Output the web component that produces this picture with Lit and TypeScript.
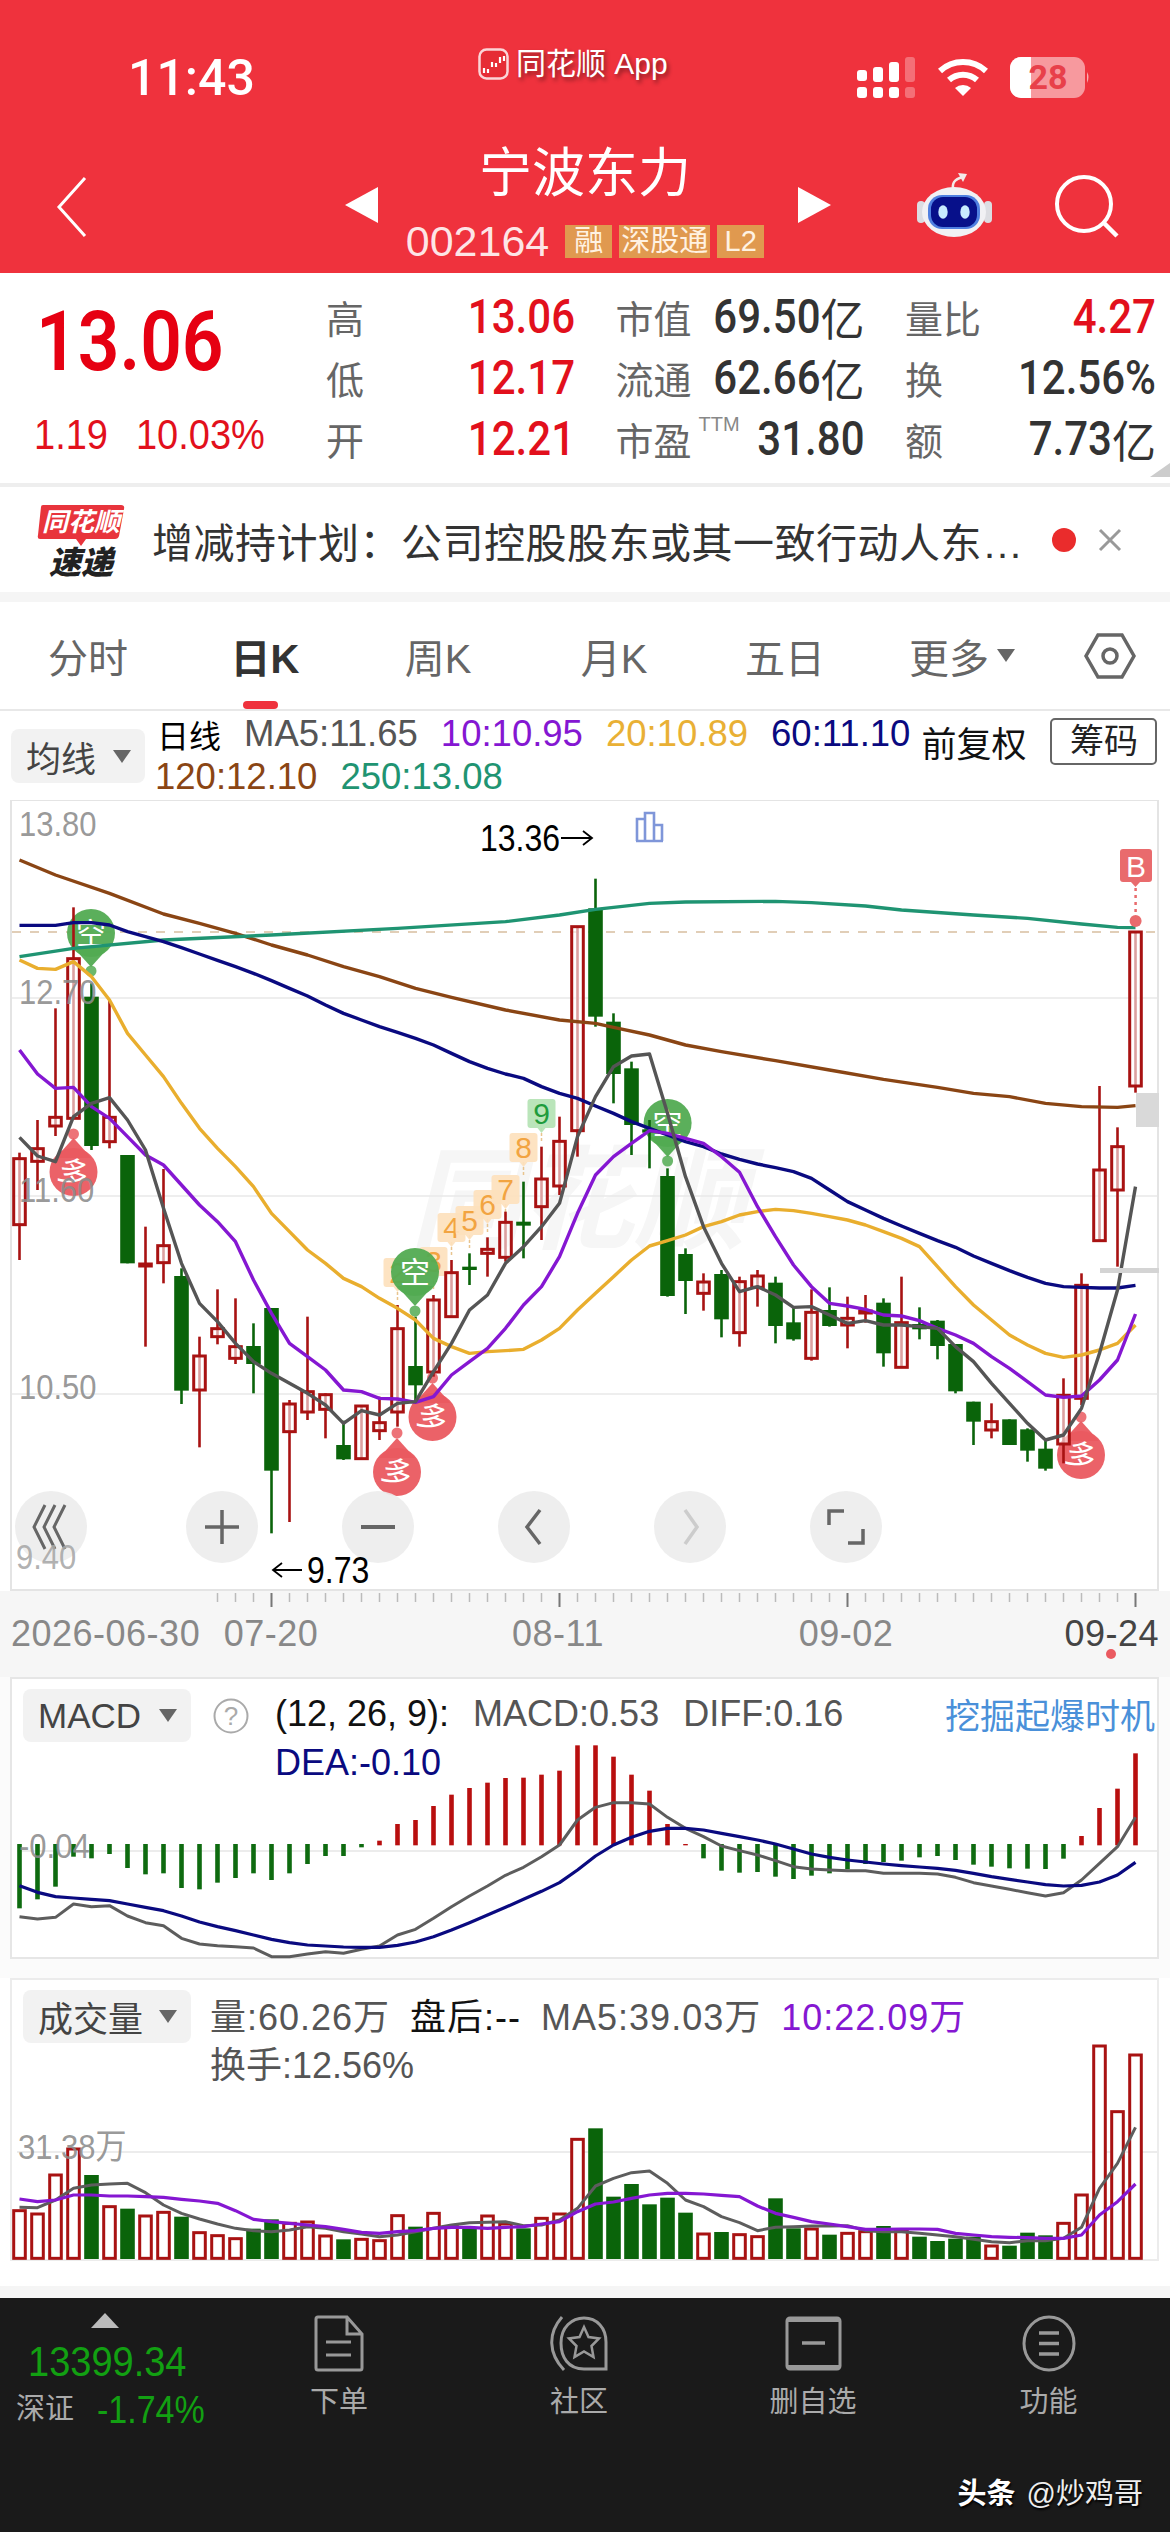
import { LitElement, html, css, svg } from "lit";
import { customElement } from "lit/decorators.js";

const X = (i: number) => 19.5 + 18 * i;
const Y = (z: number) => 1000 + z / 3;
const YM = (z: number) => 1660 + z / 3;
const YV = (z: number) => 1970 + z / 3;

const RED = "#a81212";
const GREEN = "#0a640a";

type C = [string, number, number, number, number];
const candles: C[] = [
  ["r", 458, 476, 674, 780], ["r", 360, 446, 484, 570], ["r", 25, 352, 378, 408], ["r", -278, -124, 355, 355],
  ["g", -50, -10, 438, 450], ["r", 0, 352, 425, 445], ["g", 465, 465, 790, 790], ["r", 680, 792, 798, 1040],
  ["r", 507, 737, 788, 850], ["g", 805, 828, 1172, 1212], ["r", 1010, 1068, 1170, 1342], ["r", 868, 986, 1010, 1033],
  ["r", 895, 1040, 1075, 1092], ["g", 970, 1038, 1092, 1180], ["g", 924, 924, 1412, 1600], ["r", 1200, 1212, 1295, 1566],
  ["r", 950, 1175, 1236, 1260], ["r", 1180, 1184, 1228, 1315], ["g", 1262, 1335, 1378, 1380], ["r", 1218, 1218, 1376, 1378],
  ["r", 1190, 1268, 1292, 1320], ["r", 915, 986, 1236, 1280], ["g", 950, 1098, 1156, 1205], ["r", 885, 900, 1116, 1130],
  ["r", 780, 818, 950, 950], ["g", 760, 800, 810, 855], ["r", 712, 748, 760, 830], ["r", 635, 667, 772, 785],
  ["g", 545, 665, 677, 775], ["r", 440, 537, 620, 720], ["r", 350, 424, 558, 585], ["r", -220, -220, 392, 470],
  ["g", -364, -275, 50, 80], ["g", 40, 65, 222, 310], ["g", 185, 205, 375, 465], ["g", 360, 388, 398, 505],
  ["g", 505, 528, 888, 890], ["g", 745, 762, 843, 942], ["r", 820, 846, 880, 932], ["g", 810, 822, 958, 1012],
  ["r", 830, 845, 998, 1040], ["r", 810, 828, 862, 920], ["g", 830, 848, 978, 1030], ["g", 920, 967, 1018, 1022],
  ["r", 868, 937, 1075, 1082], ["g", 862, 930, 978, 980], ["r", 890, 955, 975, 1045], ["r", 885, 933, 939, 968],
  ["g", 895, 908, 1060, 1100], ["r", 830, 968, 1102, 1102], ["g", 922, 972, 988, 1018], ["g", 960, 962, 1038, 1078],
  ["g", 1032, 1032, 1174, 1180], ["g", 1205, 1205, 1265, 1335], ["r", 1210, 1265, 1290, 1315], ["g", 1258, 1258, 1335, 1335],
  ["g", 1285, 1288, 1352, 1385], ["g", 1320, 1346, 1406, 1412], ["r", 1135, 1186, 1332, 1390], ["r", 820, 856, 1195, 1215],
  ["r", 258, 510, 722, 725], ["r", 382, 440, 570, 800], ["r", -204, -204, 258, 278],
];

const ma5 = [412,468,485,350,310,293,360,450,625,790,910,965,1030,1085,1120,1150,1180,1215,1270,1232,1245,1210,1205,1115,1030,930,885,790,740,680,610,410,290,200,168,162,340,530,680,790,875,860,885,922,920,945,970,962,975,975,980,985,1040,1085,1150,1210,1270,1320,1305,1225,1060,870,560];
const ma10 = [150,222,265,262,320,355,410,465,495,555,615,665,725,840,940,1030,1070,1110,1170,1175,1195,1197,1207,1190,1125,1085,1045,985,915,860,770,640,525,470,430,392,400,415,430,470,517,620,710,795,860,910,918,928,945,948,962,985,1005,1030,1070,1105,1145,1185,1192,1188,1140,1080,942];
const ma20 = [-120,-95,-92,-115,-70,0,100,165,230,310,385,445,500,560,640,695,750,790,835,860,895,925,960,1015,1040,1060,1055,1052,1048,1020,985,930,880,830,780,738,722,705,680,665,645,635,628,632,640,650,660,675,695,715,740,800,860,915,960,1005,1035,1060,1072,1065,1050,1030,975];
const ma60 = [-224,-224,-224,-232,-232,-225,-205,-190,-175,-157,-138,-119,-100,-80,-58,-35,-12,15,40,60,80,97,115,135,160,185,205,222,235,260,280,295,318,340,365,385,405,425,440,462,478,492,503,515,535,570,605,630,655,678,700,722,742,768,790,812,832,850,860,862,864,864,856];
const ma120: [number, number][] = [[0,-420],[2,-375],[5,-320],[8,-258],[10,-230],[12,-200],[14,-165],[16,-135],[18,-100],[20,-70],[22,-35],[24,-8],[27,30],[30,60],[32,70],[33,82],[35,105],[37,135],[39,155],[42,182],[45,210],[48,238],[51,262],[53,280],[55,290],[57,310],[59,320],[61,322],[62,317]];
const ma250: [number, number][] = [[0,-130],[3,-155],[8,-180],[14,-195],[21,-215],[27,-235],[30,-255],[32,-272],[35,-290],[37,-294],[42,-296],[44,-292],[47,-282],[49,-270],[53,-255],[56,-245],[59,-228],[61,-218],[62,-217]];

const macdBars = [745,718,680,590,595,582,624,643,640,684,688,668,654,640,660,640,612,588,588,562,542,492,480,438,404,384,368,354,353,344,332,256,256,290,344,392,492,552,595,632,638,636,650,657,647,640,628,612,606,602,592,588,600,614,620,625,626,627,596,528,444,386,280];
const macdDiff = [770,777,772,732,740,737,768,788,797,835,852,857,860,864,890,890,882,875,880,868,858,825,808,775,740,708,678,646,622,590,555,480,442,428,428,432,472,505,530,558,572,585,602,620,627,630,632,632,640,640,640,642,652,668,678,688,698,708,698,660,610,560,472];
const macdDea = [677,697,710,714,718,722,732,742,752,768,786,800,812,825,838,848,855,858,861,862,862,856,846,830,810,788,765,742,718,694,668,630,588,555,532,514,505,505,510,520,530,540,552,567,582,592,600,606,612,617,621,625,631,640,650,658,666,674,678,676,666,645,607];

const volTops = [722,732,615,537,615,710,716,738,727,740,788,797,806,776,748,760,756,798,808,808,812,737,770,730,770,775,738,762,775,745,732,508,475,680,642,703,683,728,792,786,794,800,685,775,777,794,790,785,768,780,800,813,806,800,828,827,788,796,760,675,228,425,255];
const volMa5 = [712,713,690,655,645,642,640,668,705,730,747,762,775,782,785,780,770,775,785,792,800,795,785,775,765,758,757,755,767,765,750,715,648,625,608,603,640,690,710,740,758,782,772,770,768,768,767,782,785,785,790,795,800,808,815,818,812,812,805,772,655,580,472];
const volMa10 = [687,695,690,675,675,678,678,680,682,688,693,700,722,748,755,760,765,770,778,787,790,785,782,775,772,772,775,772,770,762,755,725,702,696,685,675,670,670,672,676,680,708,730,742,755,762,770,778,778,777,777,778,790,795,800,802,803,805,805,795,735,695,642];

const line = (zs: number[], f: (z: number) => number, color: string, w = 3.4) =>
  svg`<polyline fill="none" stroke=${color} stroke-width=${w} stroke-linejoin="round" points=${zs.map((z, i) => `${X(i)},${f(z)}`).join(" ")}></polyline>`;
const sparse = (ps: [number, number][], f: (z: number) => number, color: string, w = 3.4) =>
  svg`<polyline fill="none" stroke=${color} stroke-width=${w} stroke-linejoin="round" points=${ps.map(([i, z]) => `${X(i)},${f(z)}`).join(" ")}></polyline>`;

const candle = (c: C, i: number) => {
  const x = X(i);
  const col = c[0] === "r" ? RED : GREEN;
  const wick = svg`<line x1=${x} x2=${x} y1=${Y(c[1])} y2=${Y(c[4])} stroke=${col} stroke-width="2.6"></line>`;
  const h = Y(c[3]) - Y(c[2]);
  return c[0] === "r"
    ? svg`${wick}<rect x=${x - 5.8} y=${Y(c[2])} width="11.6" height=${h} fill="#fff" fill-opacity=".6" stroke=${RED} stroke-width="3"></rect>`
    : svg`${wick}<rect x=${x - 7.3} y=${Y(c[2])} width="14.6" height=${h} fill=${GREEN}></rect>`;
};

const tag = (i: number, y1: number, label: string, bg = "#fde1bd", fg = "#f2a441") => {
  const x = X(i);
  return svg`<line x1=${x} x2=${x} y1=${y1 + 29} y2=${y1 + 44} stroke="#e8c48e" stroke-width="1.5" stroke-dasharray="3 2"></line>
    <path fill=${bg} fill-opacity=".92" d="M${x - 14} ${y1 + 3}q0-3 3-3h22q3 0 3 3v23q0 3-3 3h-7l-4 5-4-5h-7q-3 0-3-3z"></path>
    <text class="tagtx" x=${x} y=${y1 + 25} fill=${fg} text-anchor="middle">${label}</text>`;
};

const balloon = (x: number, y: number, dot: number, label: string, fill: string, rot = 0) => {
  const up = dot < y;
  const tip = up ? y - 34 : y + 34;
  return svg`<circle cx=${x} cy=${dot} r="5.5" fill=${fill} fill-opacity=".85"></circle>
    <path fill=${fill} fill-opacity=".95" d="M${x - 18} ${up ? y - 14 : y + 14}L${x} ${tip}L${x + 18} ${up ? y - 14 : y + 14}z"></path>
    <circle cx=${x} cy=${y} r="24" fill=${fill} fill-opacity=".95"></circle>
    <text class="balloontx" x=${x} y=${y + 11} text-anchor="middle" transform=${`rotate(${rot} ${x} ${y})`}>${label}</text>`;
};

const round = (cx: number, icon: unknown) => svg`<ellipse cx=${cx} cy="1527" rx="36" ry="36" fill="#ececec" fill-opacity=".9"></ellipse>${icon}`;

const ticks: number[] = [];
for (let x = 217.5; x <= 1136; x += 18) ticks.push(x);

const mainChart = () => svg`
  <rect x="0" y="1591" width="1170" height="86" fill="#f6f6f6"></rect>
  <rect x="11" y="800" width="1147" height="790" fill="#fff" stroke="#e4e4e4" stroke-width="2"></rect>
  <text class="mark" x="410" y="1240">同花顺</text>
  ${[998, 1196, 1394].map((y) => svg`<line x1="12" x2="1157" y1=${y} y2=${y} stroke="#e9e9e9" stroke-width="1.5"></line>`)}
  <line x1="12" x2="1155" y1="932" y2="932" stroke="#d8bfa0" stroke-width="1.5" stroke-dasharray="9 9"></line>
  ${tag(21, 1258, "2")}${tag(23, 1247, "3")}${tag(24, 1213, "4")}${tag(25, 1206, "5")}${tag(26, 1190, "6")}${tag(27, 1175, "7")}${tag(28, 1133, "8")}${tag(29, 1099, "9", "#b4e3b4", "#1f9c3c")}
  ${balloon(91, 933, 971, "空", "#52ab52")}
  ${balloon(415, 1272, 1311, "空", "#52ab52")}
  ${balloon(667.6, 1123, 1161, "空", "#52ab52")}
  ${balloon(73.5, 1172, 1134, "多", "#ea5a60", 20)}
  ${balloon(432.5, 1417, 1378, "多", "#ea5a60", 20)}
  ${balloon(397, 1472, 1433, "多", "#ea5a60", 20)}
  ${balloon(1081, 1455, 1417, "多", "#ea5a60", 20)}
  ${candles.map(candle)}
  ${sparse(ma120, Y, "#8a4514")}
  ${sparse(ma250, Y, "#1f9472")}
  ${line(ma60, Y, "#0a0a80")}
  ${line(ma20, Y, "#e9ae2e")}
  ${line(ma10, Y, "#8517d2")}
  ${line(ma5, Y, "#555555")}
  <rect x="1136" y="1093" width="23" height="34" fill="#d9d9d9"></rect>
  <rect x="1100" y="1268" width="59" height="5" fill="#d4d4d4"></rect>
  <text class="axis tall" x="19" y="835">13.80</text>
  <text class="axis tall" x="19" y="1003">12.70</text>
  <text class="axis tall" x="19" y="1201">11.60</text>
  <text class="axis tall" x="19" y="1398">10.50</text>
  ${round(51, svg`<path d="M45 1505l-11 22 11 22M55 1505l-11 22 11 22M65 1505l-11 22 11 22" fill="none" stroke="#666" stroke-width="3"></path>`)}
  ${round(222, svg`<path d="M222 1510v34M205 1527h34" stroke="#666" stroke-width="3.5"></path>`)}
  ${round(378, svg`<path d="M361 1527h34" stroke="#666" stroke-width="4"></path>`)}
  ${round(534, svg`<path d="M540 1510l-13 17 13 17" fill="none" stroke="#666" stroke-width="3.5"></path>`)}
  ${round(690, svg`<path d="M685 1510l12 17-12 17" fill="none" stroke="#ccc" stroke-width="3.5"></path>`)}
  ${round(846, svg`<path d="M829 1525v-14h15M863 1529v14h-15" fill="none" stroke="#666" stroke-width="3.5"></path>`)}
  <text class="axis tall faint" x="16" y="1568">9.40</text>
  <text class="note tall" x="480" y="850">13.36</text>
  <path d="M561 838h31m-9-7l9 7-9 7" fill="none" stroke="#000" stroke-width="1.8"></path>
  <path d="M302 1570h-29m9-7l-9 7 9 7" fill="none" stroke="#000" stroke-width="1.8"></path>
  <text class="note tall" x="307" y="1582">9.73</text>
  <g fill="none" stroke="#7f96d9" stroke-width="2.6"><path d="M637 841v-22h8v22M645 841v-28h9v28M654 841v-16h8v16M636 841h27"></path></g>
  <rect x="1120" y="849" width="32" height="33" rx="3" fill="#e96b6d"></rect>
  <path d="M1131 882h9l-4.500 5z" fill="#e96b6d"></path>
  <text class="btext" x="1136" y="877" text-anchor="middle">B</text>
  <line x1="1135.600" x2="1135.600" y1="888" y2="914" stroke="#e96b6d" stroke-width="2.500" stroke-dasharray="3 4"></line>
  <circle cx="1135.600" cy="921" r="6" fill="#e96b6d"></circle>
  ${ticks.map((x, k) => {
    const major = (k - 3) % 16 === 0;
    return svg`<line x1=${x} x2=${x} y1="1593" y2=${major ? 1607 : 1602} stroke=${major ? "#777" : "#bbb"} stroke-width=${major ? 2 : 1.5}></line>`;
  })}
  <text class="date" x="11" y="1646">2026-06-30</text>
  <text class="date" x="271" y="1646" text-anchor="middle">07-20</text>
  <text class="date" x="558" y="1646" text-anchor="middle">08-11</text>
  <text class="date" x="846" y="1646" text-anchor="middle">09-02</text>
  <text class="date dark" x="1159" y="1646" text-anchor="end">09-24</text>
  <circle cx="1111" cy="1654" r="5" fill="#ea5a60"></circle>
`;

const macdChart = () => svg`
  <rect x="0" y="1677" width="1170" height="301" fill="#fbfbfb"></rect>
  <rect x="11" y="1678" width="1147" height="280" fill="#fff" stroke="#e6e6e6" stroke-width="2"></rect>
  <line x1="17" x2="1157" y1="1851" y2="1851" stroke="#e6e6e6" stroke-width="1.500"></line>
  ${macdBars.map((z, i) => {
    const red = z < 555;
    const y1 = red ? YM(z) : YM(552);
    const y2 = red ? YM(556) : YM(z);
    const col = red ? "#b80f0f" : "#0e6b10";
    return svg`<rect x=${X(i) - 2.3} y=${y1} width="4.6" height=${y2 - y1} fill=${col}></rect>`;
  })}
  ${line(macdDiff, YM, "#5d5d5d", 3)}
  ${line(macdDea, YM, "#0a0a80", 3.2)}
  <text class="axis tall" x="19" y="1857">-0.04</text>
`;

const volChart = () => svg`
  <rect x="11" y="1979" width="1147" height="281" fill="#fff" stroke="#ececec" stroke-width="2"></rect>
  <line x1="17" x2="1157" y1="2152" y2="2152" stroke="#e6e6e6" stroke-width="1.500"></line>
  ${volTops.map((z, i) => {
    const x = X(i);
    const red = candles[i][0] === "r";
    return red
      ? svg`<rect x=${x - 5.8} y=${YV(z)} width="11.600" height=${YV(865) - YV(z)} fill="#fff" stroke=${RED} stroke-width="3"></rect>`
      : svg`<rect x=${x - 7.3} y=${YV(z)} width="14.600" height=${YV(867) - YV(z)} fill=${GREEN}></rect>`;
  })}
  ${line(volMa5, YV, "#5d5d5d", 3)}
  ${line(volMa10, YV, "#8517d2", 3.2)}
  <text class="axis tall" x="18" y="2158">31.38万</text>
`;

@customElement("app-root")
export class AppRoot extends LitElement {
  static styles = css`
    :host { display: block; width: 1170px; height: 2532px; overflow: hidden; background: #fff;
      font-family: "Liberation Sans", "Noto Sans CJK SC", sans-serif; color: #333; }
    svg { display: block; }
    .tall { display: inline-block; transform: scaleY(1.13); }
    svg .tall { transform-box: fill-box; transform-origin: center; }

    .head { background: #ef323d; height: 273px; color: #fff; }
    .status { height: 110px; display: flex; align-items: flex-start; }
    .time { font: 500 50px/48px Roboto, sans-serif; margin: 54px 0 0 128px; width: 350px; }
    .app { display: flex; gap: 7px; align-items: center; margin-top: 48px; width: 379px;
      font-size: 30px; line-height: 32px; text-shadow: 2px 3px 4px rgba(0, 0, 0, 0.45); }
    .sys { display: flex; gap: 23px; margin-top: 57px; align-items: flex-start; }
    .nav { display: grid; grid-template-columns: 345px 33px 420px 33px 1fr; height: 163px; }
    .back { margin: 67px 0 0 56px; }
    .tri { margin-top: 77px; }
    .mid { display: flex; flex-direction: column; align-items: center; padding: 36px 6px 0 0; }
    .name { font-size: 53px; line-height: 56px; }
    .codeRow { display: flex; align-items: center; gap: 7px; margin-top: 23px; height: 33px; }
    .code { font-size: 43px; line-height: 33px; color: rgba(255, 255, 255, 0.88); margin-right: 9px; }
    .chip { background: #e0994f; height: 33px; line-height: 33px; font-size: 29px; padding: 0 2px;
      color: #fff2e2; text-align: center; min-width: 43px; }
    .navR { display: flex; align-items: flex-start; margin: 61px 0 0 86px; gap: 62px; }
    .navR .mag { margin-top: 3px; }

    .quote { height: 210px; display: flex; position: relative; }
    .qLeft { width: 326px; }
    .price { font: 600 73px/72px Roboto, sans-serif; color: #e60012; margin: 33px 0 0 36px; }
    .chg { display: flex; gap: 28px; margin: 36px 0 0 34px; font-size: 38px; line-height: 40px; color: #e2101c; }
    .qGrid { display: grid; grid-template-columns: 249px 249px 251px; column-gap: 40.5px; grid-auto-rows: 61px;
      padding-top: 13px; align-items: center; }
    .cell { display: flex; justify-content: space-between; align-items: center; font-size: 38px; color: #666; }
    .v { font: 500 42px/44px Roboto, "Noto Sans CJK SC", sans-serif; color: #333; display: flex; align-items: center; }
    .v.up { color: #e2101c; }
    .v i { font-style: normal; font-family: "Noto Sans CJK SC", sans-serif; font-weight: 400; font-size: 44px; }
    .ttm { font-size: 20px; color: #888; margin-left: 7px; align-self: flex-start; line-height: 26px; }
    .lab { display: flex; align-items: center; }
    .corner { position: absolute; right: 0; bottom: 6px; width: 0; height: 0; border-left: 20px solid transparent; border-bottom: 14px solid #ccc; }
    .sep { height: 4px; background: #eee; }

    .news { height: 105px; display: flex; align-items: center; padding-left: 37px; }
    .newsT { width: 884px; margin-left: 27px; font-size: 41px; letter-spacing: 0.5px; white-space: nowrap; color: #333; }
    .rdot { width: 24px; height: 24px; border-radius: 50%; background: #ea2c2c; margin-left: 16px; }
    .close { margin-left: 22px; }
    .band { height: 10px; background: #f5f5f5; }

    .tabs { height: 109px; display: grid; grid-template-columns: 176px 178px 168px 184px 158px 196px 100px;
      border-bottom: 2px solid #e8e8e8; box-sizing: border-box; align-items: center; justify-items: center; }
    .tab { font-size: 40px; color: #666; height: 107px; display: flex; align-items: center; gap: 8px; position: relative; }
    .tab.on { color: #333; font-weight: 700; }
    .tab.on::after { content: ""; position: absolute; left: 12px; bottom: 0; width: 35px; height: 8px; border-radius: 4px; background: #ef323d; }
    .dn { width: 0; height: 0; border-left: 9px solid transparent; border-right: 9px solid transparent; border-top: 13px solid #666; }

    .legend { height: 89px; display: flex; align-items: flex-start; }
    .btn { background: #f2f2f2; border-radius: 8px; display: flex; align-items: center; justify-content: space-between;
      box-sizing: border-box; height: 54px; font-size: 35px; color: #444; padding: 0 14px 0 15px; }
    .btn.b1 { width: 134px; margin: 18px 0 0 11px; }
    .col { margin-left: 10px; }
    .row { display: flex; align-items: center; gap: 23px; height: 46px; font-size: 36.5px; white-space: nowrap; }
    .row1 { padding-left: 2px; }
    .row2 { height: 40px; }
    .k { color: #000; font-size: 32px; }
    .gray { color: #555; }
    .pur { color: #8517d2; }
    .yel { color: #e9b035; }
    .nav2 { color: #0a0a80; }
    .brn { color: #8a4514; }
    .teal { color: #1f9472; }
    .fq { color: #111; font-size: 35px; padding-top: 14px; margin-left: -12px; }
    .cm { border: 2px solid #666; border-radius: 5px; width: 107px; height: 47px; margin: 14px 0 0 1px; box-sizing: border-box;
      color: #222; font-size: 34px; line-height: 43px; text-align: center; }

    .panel { display: grid; }
    .panel > * { grid-area: 1 / 1; }
    .plegend { display: flex; align-items: flex-start; padding: 0 15px 0 23px; font-size: 36px; z-index: 1; align-self: start; }
    .macdL { padding-top: 12px; }
    .volL { padding-top: 12px; }
    .btn.b2 { width: 168px; height: 53px; }
    .help { margin: 9px 0 0 22px; }
    .pcol { margin-left: 26px; flex: 1; }
    .volL .pcol { margin-left: 19px; }
    .prow { display: flex; gap: 20px; height: 49px; align-items: center; white-space: nowrap; }
    .macdL .prow { gap: 24px; }
    .volL .prow { height: 48px; }
    .blue { color: #4a90d9; margin-left: auto; font-size: 35px; }
    .blk { color: #111; }
    .m { letter-spacing: 1px; }

    .gapb { height: 12px; background: #f5f5f5; }
    .bar { height: 234px; background: #1a1a1a; color: #aaa; }
    .barT { display: grid; grid-template-columns: 219px 240px 240px 228px 243px; height: 175px; }
    .idx { padding-top: 15px; display: flex; flex-direction: column; }
    .up3 { width: 0; height: 0; border-left: 14px solid transparent; border-right: 14px solid transparent; border-bottom: 15px solid #bbb; margin-left: 91px; }
    .ip { color: #12a012; font-size: 38px; line-height: 40px; margin: 13px 0 0 28px; }
    .il { display: flex; align-items: center; gap: 23px; margin: 10px 0 0 16px; font-size: 29px; color: #aaa; line-height: 36px; }
    .il b { color: #12a012; font-weight: 400; font-size: 34px; }
    .act { display: flex; flex-direction: column; align-items: center; padding-top: 17px; font-size: 29px; line-height: 36px; gap: 12px; }
    .act svg { height: 57px; }
    .wm { display: flex; justify-content: flex-end; padding: 0 27px 0 0; gap: 11px; font-size: 29px; color: #eee; align-items: center; height: 36px;
      text-shadow: 1px 2px 2px #000; }
    .wm b { font-weight: 700; color: #fff; }
  `;

  render() {
    return html`
      <div class="head">
        <div class="status">
          <div class="time">11:43</div>
          <div class="app">
            <svg width="31" height="32" viewBox="0 0 31 32">
              <rect x="1.500" y="1.500" width="28" height="29" rx="7" fill="#e62c35" stroke="#fff" stroke-width="2.500" stroke-opacity=".8"></rect>
              <path d="M6 20v5M10 21v4M14 14v5M18 15v4M22 9v6M26 8v5" stroke="#fff" stroke-width="2.200"></path>
            </svg>
            <span>同花顺 App</span>
          </div>
          <div class="sys">
            <svg width="58" height="41" viewBox="0 0 58 41" fill="#fff">
              <rect x="0" y="13" width="10" height="11" rx="3"></rect>
              <rect x="16" y="10" width="10" height="15" rx="3"></rect>
              <rect x="32" y="5" width="10" height="20" rx="3"></rect>
              <rect x="48" y="0" width="10" height="25" rx="3" fill-opacity=".3"></rect>
              <rect x="0" y="30" width="10" height="11" rx="3"></rect>
              <rect x="16" y="30" width="10" height="11" rx="3"></rect>
              <rect x="32" y="30" width="10" height="11" rx="3"></rect>
              <rect x="48" y="30" width="10" height="11" rx="3" fill-opacity=".3"></rect>
            </svg>
            <svg width="50" height="38" viewBox="0 0 50 38" style="margin-top:2px">
              <path d="M2 12a34 34 0 0 1 46 0" fill="none" stroke="#fff" stroke-width="6"></path>
              <path d="M11 21a21 21 0 0 1 28 0" fill="none" stroke="#fff" stroke-width="6"></path>
              <path d="M17 29a12 12 0 0 1 16 0l-8 8z" fill="#fff"></path>
            </svg>
            <svg width="80" height="41" viewBox="0 0 80 41" style="margin-left:-1px">
              <rect x="0" y="0" width="75" height="41" rx="11" fill="#fff" fill-opacity=".5"></rect>
              <path d="M21 0H11A11 11 0 0 0 0 11v19a11 11 0 0 0 11 11h10z" fill="#fff"></path>
              <path d="M77 15q3 5 0 11z" fill="#fff" fill-opacity=".6"></path>
              <text x="38" y="32" text-anchor="middle" fill="#e8404a" font-size="34" font-weight="700" font-family="Roboto, sans-serif">28</text>
            </svg>
          </div>
        </div>
        <div class="nav">
          <svg class="back" width="32" height="60" viewBox="0 0 32 60"><path d="M29 1L3 30l26 29" fill="none" stroke="#fff" stroke-width="3"></path></svg>
          <svg class="tri" width="33" height="36" viewBox="0 0 33 36"><path d="M33 0v36L0 18z" fill="#fff"></path></svg>
          <div class="mid">
            <div class="name">宁波东力</div>
            <div class="codeRow">
              <span class="code">002164</span>
              <span class="chip">融</span>
              <span class="chip">深股通</span>
              <span class="chip">L2</span>
            </div>
          </div>
          <svg class="tri" width="33" height="36" viewBox="0 0 33 36"><path d="M0 0v36l33-18z" fill="#fff"></path></svg>
          <div class="navR">
            <svg width="75" height="66" viewBox="0 0 75 66">
              <path d="M36 17C35 10 40 8 45 6" fill="none" stroke="#f3e9e9" stroke-width="2.500"></path>
              <path d="M41 2l9 1-4 8z" fill="#f3e9e9"></path>
              <rect x="0" y="30" width="8" height="22" rx="4" fill="#dcdde2"></rect>
              <rect x="67" y="30" width="8" height="22" rx="4" fill="#dcdde2"></rect>
              <ellipse cx="37" cy="41" rx="32" ry="25" fill="#f1f1f4"></ellipse>
              <rect x="11" y="24" width="52" height="34" rx="14" fill="#4f7fe0"></rect>
              <rect x="14" y="26" width="46" height="30" rx="12" fill="#07108a"></rect>
              <ellipse cx="26" cy="41" rx="4.700" ry="6.700" fill="#c7ebff"></ellipse>
              <ellipse cx="48" cy="41" rx="4.700" ry="6.700" fill="#c7ebff"></ellipse>
            </svg>
            <svg class="mag" width="66" height="66" viewBox="0 0 66 66"><circle cx="30" cy="30" r="27" fill="none" stroke="#fff" stroke-width="4"></circle><path d="M50 49l13 13" stroke="#fff" stroke-width="4.500"></path></svg>
          </div>
        </div>
      </div>

      <div class="quote">
        <div class="qLeft">
          <div class="price"><span class="tall">13.06</span></div>
          <div class="chg"><span class="tall">1.19</span><span class="tall">10.03%</span></div>
        </div>
        <div class="qGrid">
          ${this.cell("高", "13.06", true)}${this.cell2("市值", "69.50", "亿")}${this.cell("量比", "4.27", true)}
          ${this.cell("低", "12.17", true)}${this.cell2("流通", "62.66", "亿")}${this.cell("换", "12.56%", false)}
          ${this.cell("开", "12.21", true)}
          <div class="cell"><span class="lab">市盈<span class="ttm">TTM</span></span><span class="v"><span class="tall">31.80</span></span></div>
          ${this.cell2("额", "7.73", "亿")}
        </div>
        <div class="corner"></div>
      </div>
      <div class="sep"></div>

      <div class="news">
        <svg width="88" height="86" viewBox="0 -6 88 86">
          <path d="M6 2h78q4 0 3 4l-5 27q-1 3-4 3H49l-5 7-5-7H3q-3 0-2-4l3-28q0-2 2-2z" fill="#e8343c"></path>
          <text x="44" y="28" text-anchor="middle" fill="#fff" font-size="26" font-weight="700" font-style="italic" font-family="Noto Sans CJK SC, sans-serif">同花顺</text>
          <text x="44" y="71" text-anchor="middle" fill="#222" font-size="32" font-weight="900" font-style="italic" font-family="Noto Sans CJK SC, sans-serif">速递</text>
        </svg>
        <div class="newsT">增减持计划：公司控股股东或其一致行动人东…</div>
        <div class="rdot"></div>
        <svg class="close" width="24" height="24" viewBox="0 0 24 24"><path d="M2 2l20 20M22 2L2 22" stroke="#999" stroke-width="3"></path></svg>
      </div>
      <div class="band"></div>

      <div class="tabs">
        <div class="tab">分时</div>
        <div class="tab on">日K</div>
        <div class="tab">周K</div>
        <div class="tab">月K</div>
        <div class="tab">五日</div>
        <div class="tab">更多<span class="dn"></span></div>
        <svg width="52" height="46" viewBox="0 0 52 46"><path d="M14 2h24l12 21-12 21H14L2 23z" fill="none" stroke="#666" stroke-width="3.500"></path><circle cx="26" cy="23" r="7" fill="none" stroke="#666" stroke-width="3.500"></circle></svg>
      </div>

      <div class="legend">
        <div class="btn b1">均线<span class="dn"></span></div>
        <div class="col">
          <div class="row row1">
            <span class="k">日线</span>
            <span class="gray">MA5:11.65</span>
            <span class="pur">10:10.95</span>
            <span class="yel">20:10.89</span>
            <span class="nav2">60:11.10</span>
            <span class="fq">前复权</span>
            <span class="cm">筹码</span>
          </div>
          <div class="row row2">
            <span class="brn">120:12.10</span>
            <span class="teal">250:13.08</span>
          </div>
        </div>
      </div>

      <svg width="1170" height="877" viewBox="0 800 1170 877">
        <style>
          .axis { font: 31px "Liberation Sans", "Noto Sans CJK SC", sans-serif; fill: #8c8c8c; fill-opacity: .9; }
          .faint { fill: #a8a8a8; }
          .note { font: 32px "Liberation Sans", sans-serif; fill: #000; }
          .mark { font: italic 700 112px "Noto Sans CJK SC", sans-serif; fill: #f6f6f6; }
          .tagtx { font: 30px "Liberation Sans", sans-serif; }
          .balloontx { font: 30px "Noto Sans CJK SC", sans-serif; fill: #fff; }
          .btext { font: 30px "Liberation Sans", sans-serif; fill: #fff; }
          .date { font: 36px "Liberation Sans", sans-serif; fill: #888; letter-spacing: .5px; }
          .dark { fill: #444; }
        </style>
        ${mainChart()}
      </svg>

      <div class="panel">
        <svg width="1170" height="301" viewBox="0 1677 1170 301">${macdChart()}</svg>
        <div class="plegend macdL">
          <div class="btn b2">MACD<span class="dn"></span></div>
          <svg class="help" width="36" height="36" viewBox="0 0 36 36"><circle cx="18" cy="18" r="16.500" fill="none" stroke="#aaa" stroke-width="2"></circle><text x="18" y="27" text-anchor="middle" fill="#aaa" font-size="26" font-family="Liberation Sans, sans-serif">?</text></svg>
          <div class="pcol">
            <div class="prow">
              <span class="blk">(12, 26, 9):</span>
              <span class="gray">MACD:0.53</span>
              <span class="gray">DIFF:0.16</span>
              <span class="blue">挖掘起爆时机</span>
            </div>
            <div class="prow nav2">DEA:-0.10</div>
          </div>
        </div>
      </div>

      <div class="panel">
        <svg width="1170" height="308" viewBox="0 1978 1170 308">${volChart()}</svg>
        <div class="plegend volL">
          <div class="btn b2">成交量<span class="dn"></span></div>
          <div class="pcol">
            <div class="prow">
              <span class="gray m">量:60.26万</span>
              <span class="blk m">盘后:--</span>
              <span class="gray m">MA5:39.03万</span>
              <span class="pur m">10:22.09万</span>
            </div>
            <div class="prow gray">换手:12.56%</div>
          </div>
        </div>
      </div>
      <div class="gapb"></div>

      <div class="bar">
        <div class="barT">
          <div class="idx">
            <div class="up3"></div>
            <div class="ip"><span class="tall">13399.34</span></div>
            <div class="il">深证<b><span class="tall">-1.74%</span></b></div>
          </div>
          <div class="act">
            <svg width="52" viewBox="0 0 52 57" fill="none" stroke="#999" stroke-width="3"><path d="M3 4q0-2 2-2h29l15 17v34q0 2-2 2H5q-2 0-2-2zM34 2v17h15M13 27h25M13 40h25"></path></svg>
            下单
          </div>
          <div class="act">
            <svg width="58" viewBox="0 0 58 57" fill="none" stroke="#999" stroke-width="3"><path d="M12 2C-2 18-2 38 14 55"></path><path d="M56 54H34C18 54 11 42 11 28 11 12 22 3 34 3c13 0 22 10 22 24z"></path><path d="M34 12l4.500 10 10.500 1.500-7.500 7.500 2 11-9.500-5.500-9.500 5.500 2-11-7.500-7.500 10.500-1.500z" stroke-width="2.500"></path></svg>
            社区
          </div>
          <div class="act">
            <svg width="57" viewBox="0 0 57 57" fill="none" stroke="#999" stroke-width="3"><rect x="2" y="3" width="53" height="51" rx="3"></rect><path d="M2 5h53M2 52h53" stroke-width="4"></path><path d="M17 28h23" stroke-width="3.500"></path></svg>
            删自选
          </div>
          <div class="act">
            <svg width="54" viewBox="0 0 54 57" fill="none" stroke="#999" stroke-width="3"><ellipse cx="27" cy="28.500" rx="25" ry="26.500"></ellipse><path d="M17 18h20M17 28.500h20M17 39h20" stroke-width="3.500"></path></svg>
            功能
          </div>
        </div>
        <div class="wm"><b>头条</b><span>@炒鸡哥</span></div>
      </div>
    `;
  }

  cell(label: string, value: string, up: boolean) {
    return html`<div class="cell"><span class="lab">${label}</span><span class="v ${up ? "up" : ""}"><span class="tall">${value}</span></span></div>`;
  }

  cell2(label: string, value: string, unit: string) {
    return html`<div class="cell"><span class="lab">${label}</span><span class="v"><span class="tall">${value}</span><i>${unit}</i></span></div>`;
  }
}
